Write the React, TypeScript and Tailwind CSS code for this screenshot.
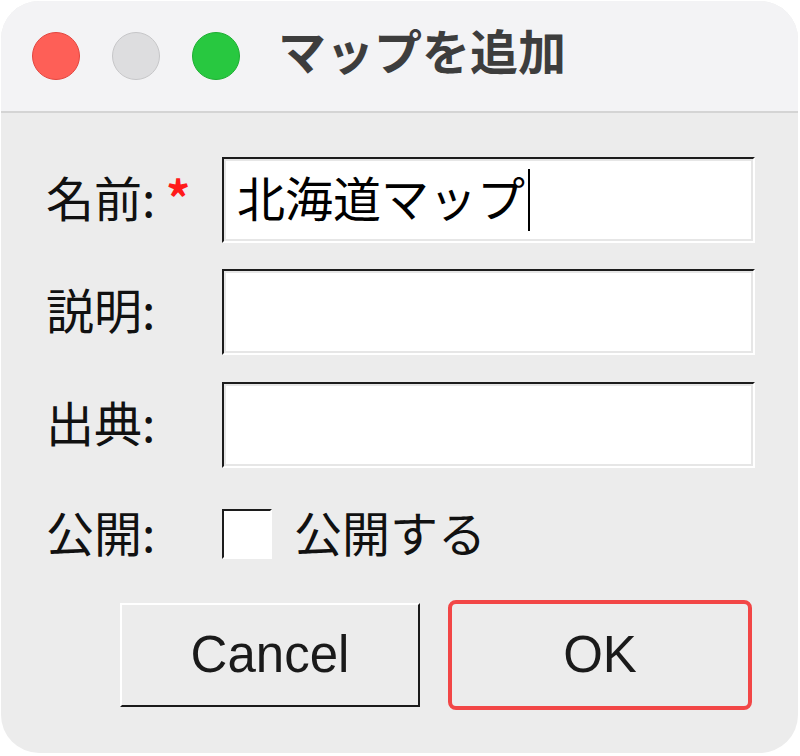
import React from "react";

const jp = "font-['Noto_Sans_CJK_JP','Noto_Sans',sans-serif]";

function Entry({ value, focused }: { value?: string; focused?: boolean }) {
    return (
        <div className="flex-1 h-[86px] border-2 border-t-[#1c1c1c] border-l-[#1c1c1c] border-b-white border-r-white">
            <div className="h-full border-2 border-[#e6e6e6] bg-white flex items-center pl-[11px]">
                {value && (
                    <span className={`${jp} pb-[8px] text-[48px] leading-none text-black`}>{value}</span>
                )}
                {focused && <span className="ml-[3px] w-[2px] h-[62px] bg-black" />}
            </div>
        </div>
    );
}

export default function App() {
    return (
        <div className="w-[800px] h-[756px] bg-white pt-[1px] pl-[1px]">
            <div className="w-[797px] h-[752px] rounded-[38px] overflow-hidden bg-[#ececec] flex flex-col">
                {/* Title bar */}
                <div className="h-[112px] shrink-0 bg-[#f3f3f5] border-b-2 border-[#d4d4d4] flex items-center pl-[31px]">
                    <div className="w-[48px] h-[48px] rounded-full bg-[#fe5f57] border border-[#e2463f]" />
                    <div className="ml-[32px] w-[48px] h-[48px] rounded-full bg-[#dddddf] border border-[#c6c6c8]" />
                    <div className="ml-[32px] w-[48px] h-[48px] rounded-full bg-[#28c840] border border-[#1fae33]" />
                    <span className={`${jp} ml-[38px] pb-[14px] text-[48px] font-bold leading-none text-[#3d3d3d]`}>
                        マップを追加
                    </span>
                </div>

                {/* Form */}
                <div className="flex flex-col pt-[44px] pl-[45px] pr-[43px]">
                    <div className="flex items-center">
                        <label className={`${jp} w-[176px] pb-[8px] text-[48px] leading-none text-[#111]`}>
                            名前: <span className="text-[#ff1a1a] font-bold">*</span>
                        </label>
                        <Entry value="北海道マップ" focused />
                    </div>
                    <div className="flex items-center mt-[26px]">
                        <label className={`${jp} w-[176px] pb-[8px] text-[48px] leading-none text-[#111]`}>説明:</label>
                        <Entry />
                    </div>
                    <div className="flex items-center mt-[27px]">
                        <label className={`${jp} w-[176px] pb-[8px] text-[48px] leading-none text-[#111]`}>出典:</label>
                        <Entry />
                    </div>
                    <div className="flex items-center mt-[41px] h-[50px]">
                        <label className={`${jp} w-[176px] pb-[6px] text-[48px] leading-none text-[#111]`}>公開:</label>
                        <div className="w-[50px] h-[50px] border-2 border-t-[#1c1c1c] border-l-[#1c1c1c] border-b-white border-r-white bg-white" />
                        <span className={`${jp} ml-[22px] pb-[6px] text-[48px] leading-none text-[#111]`}>公開する</span>
                    </div>

                    <div className="flex items-center justify-end gap-[28px] mt-[41px] mr-[3px]">
                        <button className="w-[300px] h-[104px] bg-[#ececec] border-2 border-t-white border-l-white border-b-[#1a1a1a] border-r-[#1a1a1a] font-['Liberation_Sans',Arial,sans-serif] text-[51px] text-[#1a1a1a]">
                            Cancel
                        </button>
                        <button className="w-[304px] h-[110px] bg-[#ececec] border-4 border-[#f24646] rounded-[8px] font-['Liberation_Sans',Arial,sans-serif] text-[51px] text-[#1a1a1a]">
                            OK
                        </button>
                    </div>
                </div>
            </div>
        </div>
    );
}
